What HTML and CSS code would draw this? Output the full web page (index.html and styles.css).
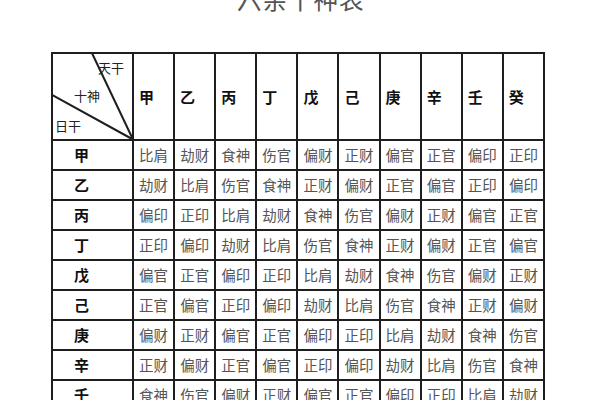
FILE: index.html
```html
<!DOCTYPE html>
<html lang="zh-CN">
<head>
<meta charset="utf-8">
<title>六亲十神表</title>
<link rel="stylesheet" href="styles.css">
</head>
<body>
<div class="title">六亲十神表</div>
<div class="grid">
  <div class="corner">
    <svg class="diag" width="80" height="86" viewBox="0 0 80 86">
      <line x1="38.7" y1="-1.5" x2="80" y2="85.5"/>
      <line x1="-1" y1="40.8" x2="80" y2="85.5"/>
    </svg>
    <span class="lbl lbl-tg">天干</span>
    <span class="lbl lbl-ss">十神</span>
    <span class="lbl lbl-rg">日干</span>
  </div>
  <div class="hd">甲</div><div class="hd">乙</div><div class="hd">丙</div><div class="hd">丁</div><div class="hd">戊</div><div class="hd">己</div><div class="hd">庚</div><div class="hd">辛</div><div class="hd">壬</div><div class="hd">癸</div>

  <div class="rh">甲</div><div class="c">比肩</div><div class="c">劫财</div><div class="c">食神</div><div class="c">伤官</div><div class="c">偏财</div><div class="c">正财</div><div class="c">偏官</div><div class="c">正官</div><div class="c">偏印</div><div class="c">正印</div>
  <div class="rh">乙</div><div class="c">劫财</div><div class="c">比肩</div><div class="c">伤官</div><div class="c">食神</div><div class="c">正财</div><div class="c">偏财</div><div class="c">正官</div><div class="c">偏官</div><div class="c">正印</div><div class="c">偏印</div>
  <div class="rh">丙</div><div class="c">偏印</div><div class="c">正印</div><div class="c">比肩</div><div class="c">劫财</div><div class="c">食神</div><div class="c">伤官</div><div class="c">偏财</div><div class="c">正财</div><div class="c">偏官</div><div class="c">正官</div>
  <div class="rh">丁</div><div class="c">正印</div><div class="c">偏印</div><div class="c">劫财</div><div class="c">比肩</div><div class="c">伤官</div><div class="c">食神</div><div class="c">正财</div><div class="c">偏财</div><div class="c">正官</div><div class="c">偏官</div>
  <div class="rh">戊</div><div class="c">偏官</div><div class="c">正官</div><div class="c">偏印</div><div class="c">正印</div><div class="c">比肩</div><div class="c">劫财</div><div class="c">食神</div><div class="c">伤官</div><div class="c">偏财</div><div class="c">正财</div>
  <div class="rh">己</div><div class="c">正官</div><div class="c">偏官</div><div class="c">正印</div><div class="c">偏印</div><div class="c">劫财</div><div class="c">比肩</div><div class="c">伤官</div><div class="c">食神</div><div class="c">正财</div><div class="c">偏财</div>
  <div class="rh">庚</div><div class="c">偏财</div><div class="c">正财</div><div class="c">偏官</div><div class="c">正官</div><div class="c">偏印</div><div class="c">正印</div><div class="c">比肩</div><div class="c">劫财</div><div class="c">食神</div><div class="c">伤官</div>
  <div class="rh">辛</div><div class="c">正财</div><div class="c">偏财</div><div class="c">正官</div><div class="c">偏官</div><div class="c">正印</div><div class="c">偏印</div><div class="c">劫财</div><div class="c">比肩</div><div class="c">伤官</div><div class="c">食神</div>
  <div class="rh">壬</div><div class="c">食神</div><div class="c">伤官</div><div class="c">偏财</div><div class="c">正财</div><div class="c">偏官</div><div class="c">正官</div><div class="c">偏印</div><div class="c">正印</div><div class="c">比肩</div><div class="c">劫财</div>
  <div class="rh">癸</div><div class="c">伤官</div><div class="c">食神</div><div class="c">正财</div><div class="c">偏财</div><div class="c">正官</div><div class="c">偏官</div><div class="c">正印</div><div class="c">偏印</div><div class="c">劫财</div><div class="c">比肩</div>
</div>
</body>
</html>
```

FILE: styles.css
```css
html, body {
  margin: 0;
  padding: 0;
  background: #ffffff;
  overflow: hidden;
}
body {
  width: 600px;
  height: 400px;
  font-family: "Noto Sans CJK SC", "Noto Sans", sans-serif;
}
.title {
  font-size: 25px;
  line-height: 25px;
  margin-top: -14px;
  text-align: center;
  color: #555555;
  letter-spacing: 0.5px;
  padding-left: 1px;
}
.grid {
  margin: 40.5px 0 0 51px;
  display: grid;
  grid-template-columns: 79px repeat(10, 39.1px);
  grid-template-rows: 85px repeat(10, 28px);
  gap: 2px;
  padding: 2px;
  background: #1e1e1e;
  width: max-content;
}
.grid > div {
  background: #ffffff;
  display: flex;
  align-items: center;
}
.corner {
  position: relative;
  overflow: visible;
}
.diag {
  position: absolute;
  left: 0;
  top: 0;
  overflow: visible;
}
.diag line {
  stroke: #1e1e1e;
  stroke-width: 2;
}
.lbl {
  position: absolute;
  font-size: 13px;
  line-height: 13px;
  color: #222222;
  white-space: nowrap;
}
.lbl-tg { left: 45px; top: 7px; }
.lbl-ss { left: 21px; top: 35px; }
.lbl-rg { left: 2px; top: 65px; }
.hd {
  font-size: 15px;
  font-weight: bold;
  color: #111111;
  padding-left: 5px;
}
.rh {
  font-size: 15px;
  font-weight: bold;
  color: #111111;
  padding-left: 21px;
}
.c {
  justify-content: center;
  font-size: 14.5px;
  color: #555555;
  white-space: nowrap;
}
```
